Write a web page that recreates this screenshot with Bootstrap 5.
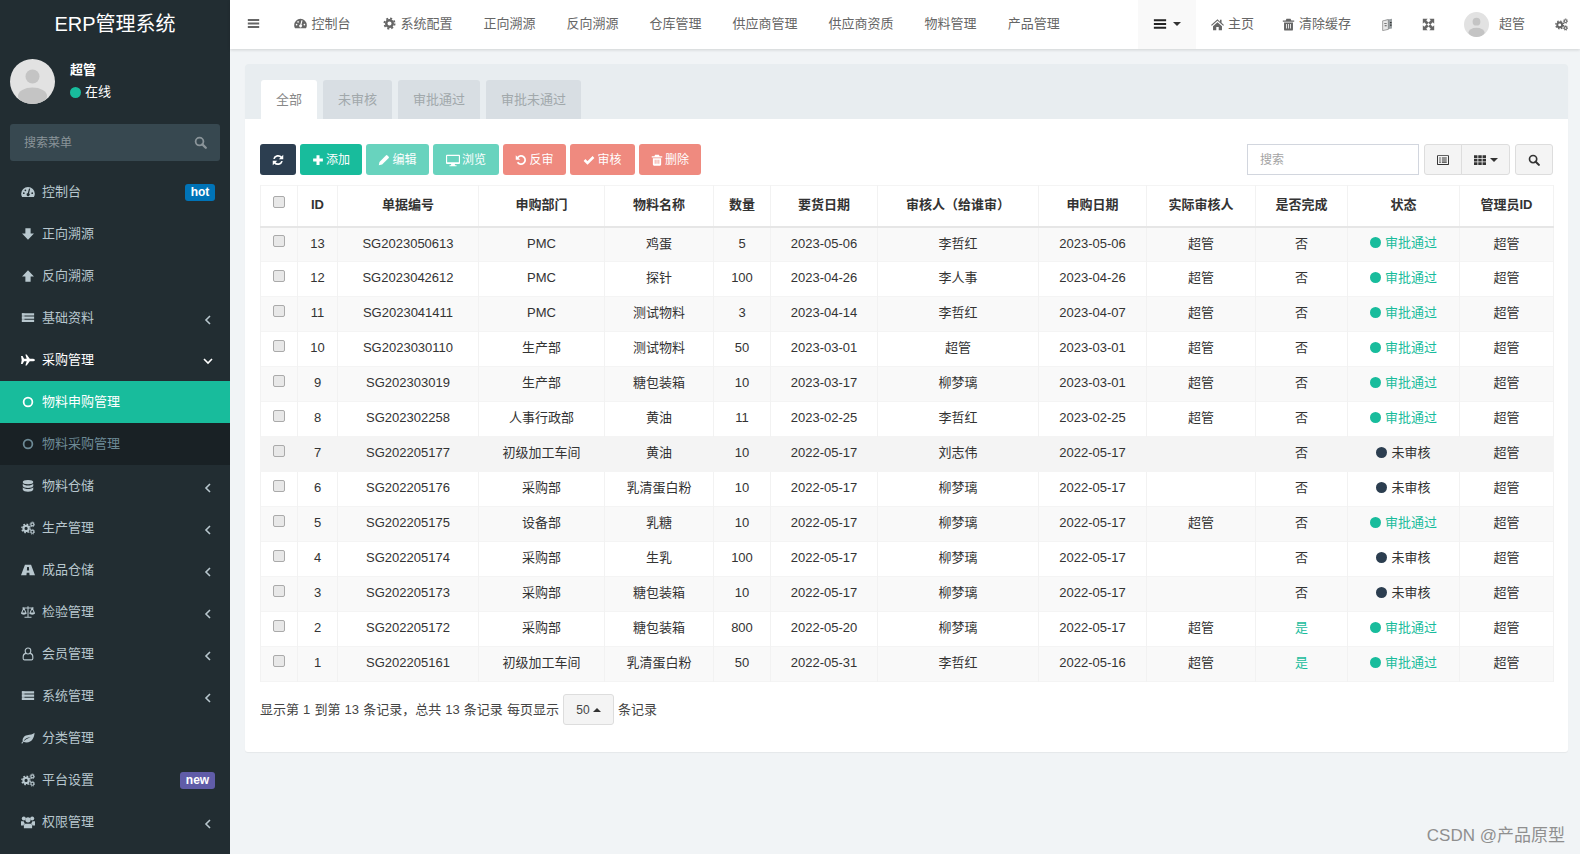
<!DOCTYPE html>
<html lang="zh">
<head>
<meta charset="utf-8">
<title>ERP管理系统</title>
<link href="https://cdn.jsdelivr.net/npm/bootstrap@5.3.0/dist/css/bootstrap.min.css" rel="stylesheet">
<style>
body{font-family:"Liberation Sans","Noto Sans CJK SC",sans-serif;font-size:13px;background:#f1f4f6;color:#333;height:854px;overflow:hidden}
.ico{width:14px;height:14px;fill:currentColor;flex:none}
.side{width:230px;flex:none;background:#222d32;height:854px;color:#b8c7ce}
.logo{height:50px;font-size:20px;color:#fff;line-height:48px;text-align:center}
.side-user{height:74px;padding:9px 10px 0;gap:15px}
.ava{border-radius:50%;flex:none}
.side-name{font-weight:700;color:#fff;line-height:20px;margin-top:1px}
.side-on{color:#fff;line-height:20px;margin-top:2px;gap:4px}
.dot{width:11px;height:11px;border-radius:50%;background:#18bc9c;display:inline-block;flex:none}
.dot-dark{background:#2c3e50}
.side-search{margin:0 10px;width:210px;height:37px;background:#374850;border-radius:3px;padding:0 13px 0 14px;color:#8a9499;font-size:12px}
.side-search .ico{width:13px;height:13px}
.side-menu{margin:10px 0 0;padding:0;list-style:none}
.side-link{height:42px;padding:0 15px 1px 21px;color:#b8c7ce;text-decoration:none;gap:7px}
.side-link .ico{width:14px;height:14px}
.side-link.open{color:#fff}
.side-link.act{background:#18bc9c;color:#fff}
.side-link.sub{background:#192125;color:#6d8a96}
.chev{margin-left:auto;width:8px;height:10px;margin-top:5px;margin-right:3px;fill:none;stroke:currentColor;stroke-width:1.6}
.chev-down{width:10px;height:8px;margin-right:2px;margin-top:3px}
.side-badge{margin-left:auto;font-size:12px;font-weight:700;border-radius:3px;padding:0;height:17px;line-height:17px;text-align:center;margin-top:2px}
.bg-hot{background:#0073b7;width:30px}
.bg-new{background:#605ca8;width:35px}
.main-col{flex:1 1 auto;min-width:0}
.top{height:49px;background:#fff;box-shadow:0 1px 3px rgba(0,0,0,.14);padding:0;align-items:stretch;flex-wrap:nowrap;justify-content:flex-start}
.top-link{display:flex;align-items:center;gap:5px;padding:0 15.5px 2px;color:#666;text-decoration:none;white-space:nowrap}
.top-link .ico{width:13px;height:13px;color:#666}
.top-burger{padding:0 18px 2px 17px}
.top-wide{padding-right:16.5px}
.top-right{margin-left:auto;display:flex;align-items:stretch}
.top-right .top-link{padding:0 15px 1px;gap:4px}
.top-right .top-dark{background:#f9f9f9;color:#333;width:58px}
.top-right .top-dark .ico{color:#222;width:14px;height:14px}
.top-right .top-clear{padding-left:13px}
.top-right .top-lang{padding-right:13px}
.top-right .top-user{padding:0 15px 1px 14px;gap:10px}
.top-right .top-end{padding:0 12px 1px 15px}
.tri{width:0;height:0;border-left:4px solid transparent;border-right:4px solid transparent;border-top:4px solid #333;margin-left:2px;display:inline-block}
.tri-up{border-top:0;border-bottom:4px solid #333;margin-left:3px}
.page{padding:15px 12px 0 15px}
.sheet{background:#fff;border-radius:3px;height:688px;box-shadow:0 1px 1px rgba(0,0,0,.05)}
.tabs-bar{height:55px;background:#e8edf0;padding:16px 0 0 16px;gap:6px;border-radius:3px 3px 0 0}
.tab-item{height:39px;line-height:39px;text-align:center;border-radius:3px 3px 0 0;background:#d8dee3;color:#a1a8ab}
.tab-w1{width:56px;background:#fff;color:#888}
.tab-w2{width:69px}
.tab-w3{width:82px}
.tab-w4{width:95px}
.sheet-body{padding:25px 15px 0}
.tools{height:31px;margin-bottom:10px}
.tools .btn{height:31px;font-size:12px;padding:0;display:inline-flex;align-items:center;justify-content:center;border-radius:3px;gap:2px;color:#fff;border:0}
.tools .ico{width:12px;height:12px}
.tb-dark{background:#2c3e50;width:36px;opacity:1}
.tb-green{background:#18bc9c;width:62px}
.tb-edit{background:#18bc9c;width:63px;opacity:.65}
.tb-view{background:#18bc9c;width:66px;opacity:.65}
.tb-red{background:#e74c3c;opacity:.65}
.tb-r1{width:63px}.tb-r2{width:65px}.tb-r3{width:62px}
.tools .tb-gap{margin-left:4px}
.tools .tb-first{margin-left:0}
.tools .tb-view .ico{width:14px;height:14px}
.find-input{width:172px;height:31px;font-size:12px;border:1px solid #d2d6de;border-radius:0;padding:0 12px;color:#333;margin-right:5px}
.find-input::placeholder{color:#a4a4a4}
.tools .tb-light{background:#f4f4f4;color:#333;border:1px solid #ddd}
.tb-w1{width:38px}.tb-w2{width:49px}.tb-w3{width:38px;margin-left:5px}
.erp-table{width:1293px;table-layout:fixed;margin:0;--bs-table-striped-bg:#f9f9f9;--bs-table-border-color:#f4f4f4;--bs-table-color:#333;--bs-table-striped-color:#333;border-color:#f4f4f4}
.erp-table th,.erp-table td{padding:0 0 2px;text-align:center;vertical-align:middle;font-size:13px;box-shadow:none}
.erp-table thead th{height:41px;font-weight:700;border-bottom:2px solid #e6e6e6}
.erp-table tbody td{height:35px}
.erp-table tbody>tr:nth-of-type(odd)>*{background:#f9f9f9;--bs-table-accent-bg:#f9f9f9}
.erp-table tbody>tr.row-hover>*{background:#f4f4f4;border-color:#f4f4f4}
.erp-table>:not(caption)>*>*{border-color:#f2f2f2}
.erp-table>tbody{border-top:0}
.c1{width:37px}.c2{width:40px}.c3{width:141px}.c4{width:126px}.c5{width:109px}.c6{width:57px}.c7{width:107px}.c8{width:161px}.c9{width:108px}.c10{width:109px}.c11{width:92px}.c12{width:112px}.c13{width:94px}
.tick{appearance:none;width:12px;height:12px;display:block;margin:-5px auto 0;background:#e8e8e8;border:1px solid #aaa;border-radius:2px}
.stat{display:inline-flex;align-items:center;gap:4px;color:#18bc9c}
.stat-pend{color:#333}
.erp-table tbody>tr>td.yes{color:#18bc9c}
.foot{margin-top:12px;height:31px;gap:4px;color:#444;word-spacing:.5px}
.size-btn{width:51px;height:31px;background:#f4f4f4;border:1px solid #ddd;border-radius:3px;padding:0;font-size:12px;color:#444;display:inline-flex;align-items:center;justify-content:center}
.mark-wm{position:absolute;right:15px;bottom:7px;font-size:17px;color:#8f8f8f;line-height:22px}
</style>
</head>
<body>
<svg width="0" height="0" class="position-absolute">
<defs>
<symbol id="i-dash" viewBox="0 0 16 16"><path fill-rule="evenodd" d="M8 2.200A7.800 7.800 0 0 0 .2 10c0 1.500.4 2.700 1.100 3.800h13.400c.7-1.100 1.100-2.300 1.100-3.800A7.800 7.800 0 0 0 8 2.200zM3.200 8.400a1 1 0 1 1 0 2 1 1 0 0 1 0-2zM5 5a1 1 0 1 1 0 2 1 1 0 0 1 0-2zm5.500-.6-1.300 5a1.800 1.800 0 1 1-1.400-.3l1.400-5zM12.800 8.400a1 1 0 1 1 0 2 1 1 0 0 1 0-2z"/></symbol>
<symbol id="i-down" viewBox="0 0 16 16"><path d="M5 1.500h6v6h3.800L8 14.500 1.200 7.500H5z"/></symbol>
<symbol id="i-up" viewBox="0 0 16 16"><path d="M8 1.500 14.800 8.500H11v6H5v-6H1.200z"/></symbol>
<symbol id="i-list" viewBox="0 0 16 16"><path d="M1 2.500h14v2.500H1zM1 6.300h14v2.500H1zM1 10.100h14v2.500H1z"/><path d="M1 2.500h3v10H1z" opacity=".75"/></symbol>
<symbol id="i-plane" viewBox="0 0 16 16"><path d="M0 3.500h1.800l1.700 3h3L5 1.800h1.500l3.500 4.700h3c1.500 0 3 .8 3 1.500s-1.500 1.500-3 1.500h-3l-3.500 4.700H5l1.500-4.700h-3l-1.700 3H0l.8-4.500z"/></symbol>
<symbol id="i-db" viewBox="0 0 16 16"><ellipse cx="8" cy="3.500" rx="6" ry="2.500"/><path d="M2 5.500c1 1.500 3.500 2 6 2s5-.5 6-2V8c-.5 1.500-3 2.200-6 2.200S2.500 9.500 2 8zM2 9.500c1 1.500 3.500 2 6 2s5-.5 6-2V12c-.5 1.800-3 2.500-6 2.500S2.500 13.800 2 12z"/></symbol>
<symbol id="i-cog" viewBox="0 0 16 16"><circle cx="8" cy="8" r="4" fill="none" stroke="currentColor" stroke-width="3"/><circle cx="8" cy="8" r="6.300" fill="none" stroke="currentColor" stroke-width="2.200" stroke-dasharray="2.500 2.450"/></symbol>
<symbol id="i-cogs" viewBox="0 0 16 16"><circle cx="5.800" cy="8.500" r="3" fill="none" stroke="currentColor" stroke-width="2.400"/><circle cx="5.800" cy="8.500" r="4.800" fill="none" stroke="currentColor" stroke-width="1.600" stroke-dasharray="1.900 1.870"/><circle cx="13" cy="3.800" r="1.700" fill="none" stroke="currentColor" stroke-width="1.300"/><circle cx="13" cy="3.800" r="2.700" fill="none" stroke="currentColor" stroke-width="1" stroke-dasharray="1.200 .920"/><circle cx="13" cy="12.300" r="1.700" fill="none" stroke="currentColor" stroke-width="1.300"/><circle cx="13" cy="12.300" r="2.700" fill="none" stroke="currentColor" stroke-width="1" stroke-dasharray="1.200 .920"/></symbol>
<symbol id="i-road" viewBox="0 0 16 16"><path fill-rule="evenodd" d="M4.500 2h7L16 14H9.800l-.3-3H6.500l-.3 3H0zM7 4.500l-.3 4h2.600L9 4.500z"/></symbol>
<symbol id="i-scale" viewBox="0 0 16 16"><path fill="none" stroke="currentColor" stroke-width="1.200" d="M8 1.500V14M4 14h8M1.500 3.500h13M3.200 3.500.6 9.300h5.200zM12.800 3.500l-2.600 5.800h5.200zM.6 9.300c.5 1.700 4.700 1.700 5.200 0M10.200 9.300c.5 1.700 4.700 1.700 5.200 0"/></symbol>
<symbol id="i-user" viewBox="0 0 16 16"><path fill="none" stroke="currentColor" stroke-width="1.300" d="M8 1.200a3.200 3.200 0 0 1 3.200 3.200c0 2-1.400 3.600-3.200 3.600S4.800 6.400 4.800 4.400A3.200 3.200 0 0 1 8 1.200zM5.400 7.300C3.500 7.800 2.500 9.200 2.500 11v2c0 1 .7 1.700 1.600 1.700h7.800c.9 0 1.600-.7 1.600-1.700v-2c0-1.800-1-3.200-2.900-3.700"/></symbol>
<symbol id="i-leaf" viewBox="0 0 16 16"><path d="M15.500 2c-.5 6-3 11-9 11-1.500 0-2.800-.3-3.600-.8L1.300 14.500.3 13.700 2 12C1.300 9 3 5.500 7 4.800c3.500-.6 6.500-.8 8.500-2.800zM4 11c2-2 4-3 7-4-3 0-6 1.200-7.500 3.500z"/></symbol>
<symbol id="i-group" viewBox="0 0 16 16"><circle cx="3.200" cy="4" r="2.300"/><circle cx="12.800" cy="4" r="2.300"/><circle cx="8" cy="5.500" r="3"/><path d="M0 7h3c.3 1 .8 1.800 1.500 2.300C3.500 10 3 11 3 12H0zM13 7h3v5h-3c0-1-.5-2-1.500-2.700.7-.5 1.200-1.300 1.500-2.300zM4.500 10h7c1 .5 1.200 1.500 1.200 2.500V15H3.300v-2.500c0-1 .2-2 1.200-2.500z"/></symbol>
<symbol id="i-bars" viewBox="0 0 16 16"><path d="M1 2.500h14v2.300H1zM1 6.800h14v2.300H1zM1 11.200h14v2.300H1z"/></symbol>
<symbol id="i-search" viewBox="0 0 16 16"><circle cx="6.800" cy="6.800" r="4.800" fill="none" stroke="currentColor" stroke-width="2.200"/><path d="m10.300 10.300 4.200 4.200" stroke="currentColor" stroke-width="2.800" stroke-linecap="round"/></symbol>
<symbol id="i-refresh" viewBox="0 0 16 16"><path fill="none" stroke="currentColor" stroke-width="2.300" d="M2.600 6.500A5.700 5.700 0 0 1 12.500 4.500M13.400 9.500A5.700 5.700 0 0 1 3.500 11.500"/><path d="M15 1v6H9zM1 15V9h6z"/></symbol>
<symbol id="i-plus" viewBox="0 0 16 16"><path d="M6 1.500h4V6h4.500v4H10v4.500H6V10H1.500V6H6z"/></symbol>
<symbol id="i-pencil" viewBox="0 0 16 16"><path d="M1 15l1-4.500L10.800 1.700a1 1 0 0 1 1.400 0l2.100 2.100a1 1 0 0 1 0 1.400L5.500 14z"/></symbol>
<symbol id="i-desk" viewBox="0 0 16 16"><path fill-rule="evenodd" d="M1 2h14a1 1 0 0 1 1 1v8.500a1 1 0 0 1-1 1H1a1 1 0 0 1-1-1V3a1 1 0 0 1 1-1zm.3 1.300v7.400h13.400V3.300zM6 12.500h4l.4 1.500H12v1H4v-1h1.600z"/></symbol>
<symbol id="i-undo" viewBox="0 0 16 16"><path fill="none" stroke="currentColor" stroke-width="2.300" d="M3.500 5A5.500 5.500 0 1 1 3.400 11"/><path d="M1 1.500v6h6z"/></symbol>
<symbol id="i-check" viewBox="0 0 16 16"><path fill="none" stroke="currentColor" stroke-width="3.300" d="m2 8 4 4 8-8"/></symbol>
<symbol id="i-trash" viewBox="0 0 16 16"><path fill-rule="evenodd" d="M5.500 1h5l1 2H15v1.500H1V3h3.500zM2.500 5.500h11V14a1.500 1.500 0 0 1-1.500 1.500H4A1.500 1.500 0 0 1 2.500 14zm2.500 2v5.500h1V7.500zm2.500 0v5.500h1V7.500zm2.500 0v5.500h1V7.500z"/></symbol>
<symbol id="i-home" viewBox="0 0 16 16"><path d="M8 1.500 0 8.500l1 1.100L8 3.500l7 6.100 1-1.100-3-2.600V2h-2v2.500zM2.500 10 8 5.200l5.500 4.800v5H9.500v-4h-3v4h-4z"/></symbol>
<symbol id="i-lang" viewBox="0 0 16 16"><path fill="#9aa0a3" d="M5 2.500 13.500 1v12L5 14.500z"/><path fill="#e8e8e8" stroke="#777" stroke-width=".8" d="M2 3.500 9 2v12l-7 1.500z"/><path d="M11 5h2v1.500h-2zM11 8h2v1.500h-2z" fill="#333"/><path d="M4 6h3v1.200H4zM4.500 9H7v1.200H4.500z" fill="#555"/></symbol>
<symbol id="i-expand" viewBox="0 0 16 16"><path d="M1 1h6L5.200 2.800l3 3-2.400 2.400-3-3L1 7zM15 1v6l-1.800-1.800-3 3-2.400-2.400 3-3L9 1zM15 15H9l1.800-1.800-3-3 2.400-2.400 3 3L15 9zM1 15V9l1.800 1.800 3-3 2.400 2.400-3 3L7 15z"/></symbol>
<symbol id="i-alt" viewBox="0 0 16 16"><path fill-rule="evenodd" d="M1 1.500h14a1 1 0 0 1 1 1v11a1 1 0 0 1-1 1H1a1 1 0 0 1-1-1v-11a1 1 0 0 1 1-1zm.3 1.300v10.400h13.400V2.800zM3 4.500h2V6H3zm3.500 0H13V6H6.500zM3 7.300h2v1.500H3zm3.500 0H13v1.500H6.500zM3 10.100h2v1.500H3zm3.500 0H13v1.500H6.500z"/></symbol>
<symbol id="i-th" viewBox="0 0 16 16"><path d="M0 1.500h4.600v3.800H0zM5.700 1.500h4.600v3.800H5.700zM11.400 1.500H16v3.800h-4.600zM0 6.200h4.600V10H0zM5.700 6.200h4.600V10H5.700zM11.400 6.200H16V10h-4.600zM0 10.900h4.600v3.800H0zM5.700 10.900h4.600v3.800H5.700zM11.400 10.900H16v3.800h-4.600z"/></symbol>
<symbol id="i-ring" viewBox="0 0 16 16"><circle cx="8" cy="8" r="5" fill="none" stroke="currentColor" stroke-width="2"/></symbol>
<symbol id="i-person" viewBox="0 0 45 45"><rect width="45" height="45" fill="#e2e2e2"/><circle cx="22.500" cy="17.500" r="7" fill="#c4c4c4"/><ellipse cx="22.500" cy="37" rx="14.500" ry="8.500" fill="#c4c4c4"/></symbol>
<symbol id="i-left" viewBox="0 0 8 10"><path d="M6 1 2 5l4 4"/></symbol>
<symbol id="i-dn" viewBox="0 0 10 8"><path d="m1 2 4 4 4-4"/></symbol>
</defs>
</svg>

<div class="d-flex position-relative">
<aside class="side">
  <div class="logo">ERP管理系统</div>
  <div class="side-user d-flex">
    <svg class="ava" width="45" height="45"><use href="#i-person"/></svg>
    <div>
      <div class="side-name">超管</div>
      <div class="side-on d-flex align-items-center"><span class="dot"></span>在线</div>
    </div>
  </div>
  <div class="side-search d-flex align-items-center justify-content-between"><span>搜索菜单</span><svg class="ico"><use href="#i-search"/></svg></div>
  <ul class="side-menu">
    <li><a class="side-link d-flex align-items-center" href="#"><svg class="ico"><use href="#i-dash"/></svg>控制台<span class="badge side-badge bg-hot">hot</span></a></li>
    <li><a class="side-link d-flex align-items-center" href="#"><svg class="ico"><use href="#i-down"/></svg>正向溯源</a></li>
    <li><a class="side-link d-flex align-items-center" href="#"><svg class="ico"><use href="#i-up"/></svg>反向溯源</a></li>
    <li><a class="side-link d-flex align-items-center" href="#"><svg class="ico"><use href="#i-list"/></svg>基础资料<svg class="chev"><use href="#i-left"/></svg></a></li>
    <li><a class="side-link open d-flex align-items-center" href="#"><svg class="ico"><use href="#i-plane"/></svg>采购管理<svg class="chev chev-down"><use href="#i-dn"/></svg></a></li>
    <li><a class="side-link act d-flex align-items-center" href="#"><svg class="ico"><use href="#i-ring"/></svg>物料申购管理</a></li>
    <li><a class="side-link sub d-flex align-items-center" href="#"><svg class="ico"><use href="#i-ring"/></svg>物料采购管理</a></li>
    <li><a class="side-link d-flex align-items-center" href="#"><svg class="ico"><use href="#i-db"/></svg>物料仓储<svg class="chev"><use href="#i-left"/></svg></a></li>
    <li><a class="side-link d-flex align-items-center" href="#"><svg class="ico"><use href="#i-cogs"/></svg>生产管理<svg class="chev"><use href="#i-left"/></svg></a></li>
    <li><a class="side-link d-flex align-items-center" href="#"><svg class="ico"><use href="#i-road"/></svg>成品仓储<svg class="chev"><use href="#i-left"/></svg></a></li>
    <li><a class="side-link d-flex align-items-center" href="#"><svg class="ico"><use href="#i-scale"/></svg>检验管理<svg class="chev"><use href="#i-left"/></svg></a></li>
    <li><a class="side-link d-flex align-items-center" href="#"><svg class="ico"><use href="#i-user"/></svg>会员管理<svg class="chev"><use href="#i-left"/></svg></a></li>
    <li><a class="side-link d-flex align-items-center" href="#"><svg class="ico"><use href="#i-list"/></svg>系统管理<svg class="chev"><use href="#i-left"/></svg></a></li>
    <li><a class="side-link d-flex align-items-center" href="#"><svg class="ico"><use href="#i-leaf"/></svg>分类管理</a></li>
    <li><a class="side-link d-flex align-items-center" href="#"><svg class="ico"><use href="#i-cogs"/></svg>平台设置<span class="badge side-badge bg-new">new</span></a></li>
    <li><a class="side-link d-flex align-items-center" href="#"><svg class="ico"><use href="#i-group"/></svg>权限管理<svg class="chev"><use href="#i-left"/></svg></a></li>
  </ul>
</aside>

<div class="main-col">
  <nav class="navbar top d-flex">
    <a class="top-link top-burger" href="#"><svg class="ico"><use href="#i-bars"/></svg></a>
    <a class="top-link top-wide" href="#"><svg class="ico"><use href="#i-dash"/></svg>控制台</a>
    <a class="top-link" href="#"><svg class="ico"><use href="#i-cog"/></svg>系统配置</a>
    <a class="top-link" href="#">正向溯源</a>
    <a class="top-link" href="#">反向溯源</a>
    <a class="top-link" href="#">仓库管理</a>
    <a class="top-link" href="#">供应商管理</a>
    <a class="top-link" href="#">供应商资质</a>
    <a class="top-link" href="#">物料管理</a>
    <a class="top-link" href="#">产品管理</a>
    <div class="top-right">
      <a class="top-link top-dark" href="#"><svg class="ico"><use href="#i-bars"/></svg><span class="tri"></span></a>
      <a class="top-link" href="#"><svg class="ico"><use href="#i-home"/></svg>主页</a>
      <a class="top-link top-clear" href="#"><svg class="ico"><use href="#i-trash"/></svg>清除缓存</a>
      <a class="top-link top-lang" href="#"><svg class="ico"><use href="#i-lang"/></svg></a>
      <a class="top-link" href="#"><svg class="ico"><use href="#i-expand"/></svg></a>
      <a class="top-link top-user" href="#"><svg class="ava" width="25" height="25"><use href="#i-person"/></svg>超管</a>
      <a class="top-link top-end" href="#"><svg class="ico"><use href="#i-cogs"/></svg></a>
    </div>
  </nav>

  <main class="page">
    <div class="sheet">
      <div class="tabs-bar d-flex">
        <div class="tab-item tab-w1">全部</div>
        <div class="tab-item tab-w2">未审核</div>
        <div class="tab-item tab-w3">审批通过</div>
        <div class="tab-item tab-w4">审批未通过</div>
      </div>
      <div class="sheet-body">
        <div class="tools d-flex align-items-center">
          <button class="btn tb-dark tb-first"><svg class="ico"><use href="#i-refresh"/></svg></button>
          <button class="btn tb-green tb-gap"><svg class="ico"><use href="#i-plus"/></svg>添加</button>
          <button class="btn tb-edit tb-gap"><svg class="ico"><use href="#i-pencil"/></svg>编辑</button>
          <button class="btn tb-view tb-gap"><svg class="ico"><use href="#i-desk"/></svg>浏览</button>
          <button class="btn tb-red tb-r1 tb-gap"><svg class="ico"><use href="#i-undo"/></svg>反审</button>
          <button class="btn tb-red tb-r2 tb-gap"><svg class="ico"><use href="#i-check"/></svg>审核</button>
          <button class="btn tb-red tb-r3 tb-gap"><svg class="ico"><use href="#i-trash"/></svg>删除</button>
          <input class="form-control find-input ms-auto" placeholder="搜索">
          <div class="btn-group">
            <button class="btn tb-light tb-w1"><svg class="ico"><use href="#i-alt"/></svg></button>
            <button class="btn tb-light tb-w2"><svg class="ico"><use href="#i-th"/></svg><span class="tri"></span></button>
          </div>
          <button class="btn tb-light tb-w3"><svg class="ico"><use href="#i-search"/></svg></button>
        </div>
        <table class="table table-bordered table-striped erp-table">
          <thead>
            <tr>
              <th class="c1"><input type="checkbox" class="tick"></th>
              <th class="c2">ID</th><th class="c3">单据编号</th><th class="c4">申购部门</th><th class="c5">物料名称</th><th class="c6">数量</th><th class="c7">要货日期</th><th class="c8">审核人（给谁审）</th><th class="c9">申购日期</th><th class="c10">实际审核人</th><th class="c11">是否完成</th><th class="c12">状态</th><th class="c13">管理员ID</th>
            </tr>
          </thead>
          <tbody>
            <tr><td><input type="checkbox" class="tick"></td><td>13</td><td>SG2023050613</td><td>PMC</td><td>鸡蛋</td><td>5</td><td>2023-05-06</td><td>李哲红</td><td>2023-05-06</td><td>超管</td><td>否</td><td><span class="stat"><span class="dot"></span>审批通过</span></td><td>超管</td></tr>
            <tr><td><input type="checkbox" class="tick"></td><td>12</td><td>SG2023042612</td><td>PMC</td><td>探针</td><td>100</td><td>2023-04-26</td><td>李人事</td><td>2023-04-26</td><td>超管</td><td>否</td><td><span class="stat"><span class="dot"></span>审批通过</span></td><td>超管</td></tr>
            <tr><td><input type="checkbox" class="tick"></td><td>11</td><td>SG2023041411</td><td>PMC</td><td>测试物料</td><td>3</td><td>2023-04-14</td><td>李哲红</td><td>2023-04-07</td><td>超管</td><td>否</td><td><span class="stat"><span class="dot"></span>审批通过</span></td><td>超管</td></tr>
            <tr><td><input type="checkbox" class="tick"></td><td>10</td><td>SG2023030110</td><td>生产部</td><td>测试物料</td><td>50</td><td>2023-03-01</td><td>超管</td><td>2023-03-01</td><td>超管</td><td>否</td><td><span class="stat"><span class="dot"></span>审批通过</span></td><td>超管</td></tr>
            <tr><td><input type="checkbox" class="tick"></td><td>9</td><td>SG202303019</td><td>生产部</td><td>糖包装箱</td><td>10</td><td>2023-03-17</td><td>柳梦璃</td><td>2023-03-01</td><td>超管</td><td>否</td><td><span class="stat"><span class="dot"></span>审批通过</span></td><td>超管</td></tr>
            <tr><td><input type="checkbox" class="tick"></td><td>8</td><td>SG202302258</td><td>人事行政部</td><td>黄油</td><td>11</td><td>2023-02-25</td><td>李哲红</td><td>2023-02-25</td><td>超管</td><td>否</td><td><span class="stat"><span class="dot"></span>审批通过</span></td><td>超管</td></tr>
            <tr class="row-hover"><td><input type="checkbox" class="tick"></td><td>7</td><td>SG202205177</td><td>初级加工车间</td><td>黄油</td><td>10</td><td>2022-05-17</td><td>刘志伟</td><td>2022-05-17</td><td></td><td>否</td><td><span class="stat stat-pend"><span class="dot dot-dark"></span>未审核</span></td><td>超管</td></tr>
            <tr><td><input type="checkbox" class="tick"></td><td>6</td><td>SG202205176</td><td>采购部</td><td>乳清蛋白粉</td><td>10</td><td>2022-05-17</td><td>柳梦璃</td><td>2022-05-17</td><td></td><td>否</td><td><span class="stat stat-pend"><span class="dot dot-dark"></span>未审核</span></td><td>超管</td></tr>
            <tr><td><input type="checkbox" class="tick"></td><td>5</td><td>SG202205175</td><td>设备部</td><td>乳糖</td><td>10</td><td>2022-05-17</td><td>柳梦璃</td><td>2022-05-17</td><td>超管</td><td>否</td><td><span class="stat"><span class="dot"></span>审批通过</span></td><td>超管</td></tr>
            <tr><td><input type="checkbox" class="tick"></td><td>4</td><td>SG202205174</td><td>采购部</td><td>生乳</td><td>100</td><td>2022-05-17</td><td>柳梦璃</td><td>2022-05-17</td><td></td><td>否</td><td><span class="stat stat-pend"><span class="dot dot-dark"></span>未审核</span></td><td>超管</td></tr>
            <tr><td><input type="checkbox" class="tick"></td><td>3</td><td>SG202205173</td><td>采购部</td><td>糖包装箱</td><td>10</td><td>2022-05-17</td><td>柳梦璃</td><td>2022-05-17</td><td></td><td>否</td><td><span class="stat stat-pend"><span class="dot dot-dark"></span>未审核</span></td><td>超管</td></tr>
            <tr><td><input type="checkbox" class="tick"></td><td>2</td><td>SG202205172</td><td>采购部</td><td>糖包装箱</td><td>800</td><td>2022-05-20</td><td>柳梦璃</td><td>2022-05-17</td><td>超管</td><td class="yes">是</td><td><span class="stat"><span class="dot"></span>审批通过</span></td><td>超管</td></tr>
            <tr><td><input type="checkbox" class="tick"></td><td>1</td><td>SG202205161</td><td>初级加工车间</td><td>乳清蛋白粉</td><td>50</td><td>2022-05-31</td><td>李哲红</td><td>2022-05-16</td><td>超管</td><td class="yes">是</td><td><span class="stat"><span class="dot"></span>审批通过</span></td><td>超管</td></tr>
          </tbody>
        </table>
        <div class="foot d-flex align-items-center">
          <span>显示第 1 到第 13 条记录，总共 13 条记录 每页显示</span>
          <button class="size-btn">50<span class="tri tri-up"></span></button>
          <span>条记录</span>
        </div>
      </div>
    </div>
  </main>
</div>
<div class="mark-wm">CSDN @产品原型</div>
</div>
</body>
</html>
